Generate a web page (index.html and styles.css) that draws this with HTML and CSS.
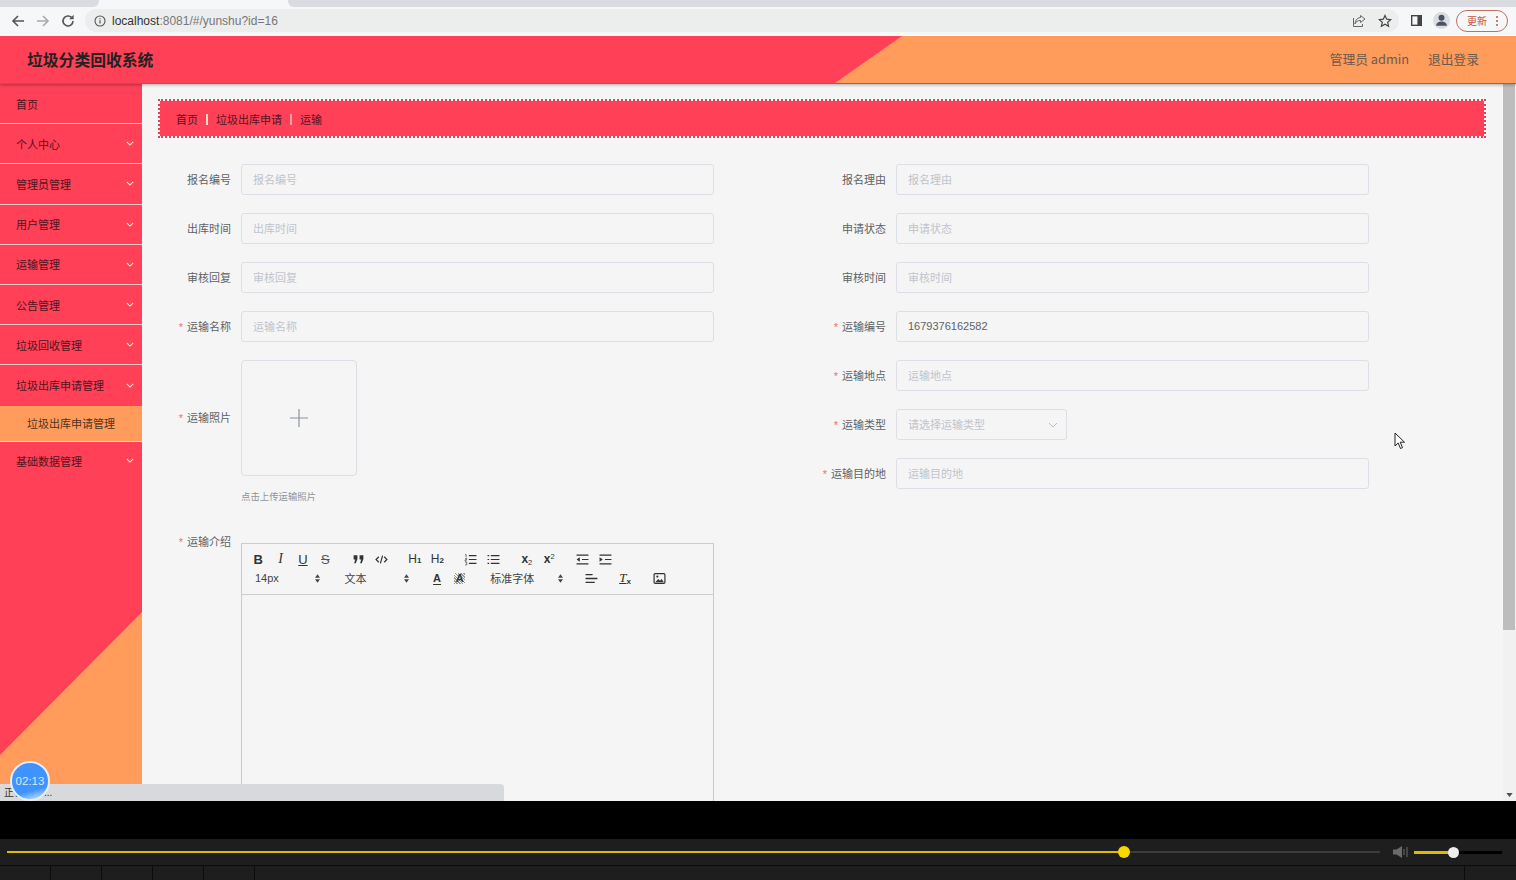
FILE: index.html
```html
<!DOCTYPE html>
<html lang="zh-CN">
<head>
<meta charset="utf-8">
<title>垃圾分类回收系统</title>
<link rel="stylesheet" href="styles.css">
</head>
<body>
<div class="tabstrip"><div class="tab-prev"></div><div class="tab-active"></div><div class="tab-next"></div></div>
<div class="toolbar">
  <div class="nav-icons">
    <svg class="nav-ico" viewBox="0 0 16 16"><path d="M14 8H3M8 3 3 8l5 5" fill="none" stroke="#555" stroke-width="1.6"/></svg>
    <svg class="nav-ico" viewBox="0 0 16 16"><path d="M2 8h11M8 3l5 5-5 5" fill="none" stroke="#aaa" stroke-width="1.6"/></svg>
    <svg class="nav-ico" viewBox="0 0 16 16"><path d="M13 8a5 5 0 1 1-1.5-3.6" fill="none" stroke="#555" stroke-width="1.6"/><path d="M13.6 1.8v4.4H9.2z" fill="#555"/></svg>
  </div>
  <div class="urlbar">
    <svg class="info-ico" viewBox="0 0 12 12"><circle cx="6" cy="6" r="5" fill="none" stroke="#555" stroke-width="1.1"/><path d="M6 5.2v3.4M6 3.2v1" stroke="#555" stroke-width="1.2"/></svg>
    <span class="url"><span class="url-host">localhost</span>:8081/#/yunshu?id=16</span>
    <span class="url-end">
      <svg class="url-ico" viewBox="0 0 14 14"><path d="M8.5 1.5 13 5 8.500 8.500V6.500C5.500 6.500 4 7.500 3 10 3 6.500 5 3.800 8.500 3.500zM1.500 4v8.500h9V10" fill="none" stroke="#666" stroke-width="1"/></svg>
      <svg class="url-ico" viewBox="0 0 14 14"><path d="m7 1.500 1.700 3.700 4 .4-3 2.700.9 4L7 10.200l-3.600 2.100.9-4-3-2.700 4-.4z" fill="none" stroke="#444" stroke-width="1.200"/></svg>
    </span>
  </div>
  <svg class="panel-ico" viewBox="0 0 12 12"><rect x=".75" y=".75" width="10.500" height="10.500" fill="none" stroke="#444" stroke-width="1.500"/><rect x="7" y="1" width="4" height="10" fill="#444"/></svg>
  <div class="avatar"><svg viewBox="0 0 16 16"><circle cx="8" cy="5.500" r="2.800" fill="#4a5160"/><path d="M2.800 13c.5-3 2.500-4 5.200-4s4.700 1 5.200 4z" fill="#4a5160"/></svg></div>
  <div class="update"><span>更新</span><svg class="kebab" viewBox="0 0 4 12"><circle cx="2" cy="2" r="1" fill="#c5543f"/><circle cx="2" cy="6" r="1" fill="#c5543f"/><circle cx="2" cy="10" r="1" fill="#c5543f"/></svg></div>
</div>

<div class="page">
  <header class="app-header">
    <h1 class="app-title">垃圾分类回收系统</h1>
    <div class="user-links"><span>管理员 admin</span><span>退出登录</span></div>
  </header>
  <div class="app-body">
    <nav class="sidebar">
      <div class="menu-item plain"><span>首页</span></div>
      <div class="menu-item"><span>个人中心</span><svg class="chev" viewBox="0 0 10 6"><path d="m1 1 4 4 4-4" fill="none" stroke="currentColor" stroke-width="1.300"/></svg></div>
      <div class="menu-item"><span>管理员管理</span><svg class="chev" viewBox="0 0 10 6"><path d="m1 1 4 4 4-4" fill="none" stroke="currentColor" stroke-width="1.300"/></svg></div>
      <div class="menu-item"><span>用户管理</span><svg class="chev" viewBox="0 0 10 6"><path d="m1 1 4 4 4-4" fill="none" stroke="currentColor" stroke-width="1.300"/></svg></div>
      <div class="menu-item"><span>运输管理</span><svg class="chev" viewBox="0 0 10 6"><path d="m1 1 4 4 4-4" fill="none" stroke="currentColor" stroke-width="1.300"/></svg></div>
      <div class="menu-item"><span>公告管理</span><svg class="chev" viewBox="0 0 10 6"><path d="m1 1 4 4 4-4" fill="none" stroke="currentColor" stroke-width="1.300"/></svg></div>
      <div class="menu-item"><span>垃圾回收管理</span><svg class="chev" viewBox="0 0 10 6"><path d="m1 1 4 4 4-4" fill="none" stroke="currentColor" stroke-width="1.300"/></svg></div>
      <div class="menu-item open"><span>垃圾出库申请管理</span><svg class="chev" viewBox="0 0 10 6"><path d="m1 1 4 4 4-4" fill="none" stroke="currentColor" stroke-width="1.300"/></svg></div>
      <div class="submenu-item">垃圾出库申请管理</div>
      <div class="menu-item open last"><span>基础数据管理</span><svg class="chev" viewBox="0 0 10 6"><path d="m1 1 4 4 4-4" fill="none" stroke="currentColor" stroke-width="1.300"/></svg></div>
    </nav>
    <main class="content">
      <div class="breadcrumb">
        <span class="crumb">首页</span><i class="sep"></i><span class="crumb">垃圾出库申请</span><i class="sep dim"></i><span class="crumb">运输</span>
      </div>
      <div class="form">
        <div class="form-col">
          <div class="row"><label class="label">报名编号</label><div class="input ph">报名编号</div></div>
          <div class="row"><label class="label">出库时间</label><div class="input ph">出库时间</div></div>
          <div class="row"><label class="label">审核回复</label><div class="input ph">审核回复</div></div>
          <div class="row"><label class="label req">运输名称</label><div class="input ph">运输名称</div></div>
          <div class="row upload-row"><label class="label req">运输照片</label>
            <div class="upload"><svg class="plus" viewBox="0 0 18 18"><path d="M9 0v18M0 9h18" stroke="#8c939d" stroke-width="1.200"/></svg></div>
          </div>
          <div class="hint">点击上传运输照片</div>
          <div class="row editor-row"><label class="label req">运输介绍</label>
            <div class="editor">
              <div class="ed-toolbar">
                <div class="ed-line first">
                  <div class="ed-group">
                    <span class="btn b">B</span><span class="btn it">I</span><span class="btn un">U</span><span class="btn st">S</span>
                  </div>
                  <div class="ed-group">
                    <span class="btn"><svg class="ed-ico" viewBox="0 0 12 12"><path d="M1.500 2h3.500v3.500L3.500 9.500H2l1-3.500H1.500zM7 2h3.500v3.500L9 9.500H7.500l1-3.500H7z" fill="#333"/></svg></span>
                    <span class="btn"><svg class="ed-ico" viewBox="0 0 12 12"><path d="M3.500 3.500 1 6l2.500 2.500M8.500 3.500 11 6 8.500 8.500M7 2.500 5 9.500" fill="none" stroke="#333" stroke-width="1.100"/></svg></span>
                  </div>
                  <div class="ed-group">
                    <span class="btn h">H<small>1</small></span><span class="btn h">H<small>2</small></span>
                  </div>
                  <div class="ed-group">
                    <span class="btn"><svg class="ed-ico" viewBox="0 0 12 12"><path d="M4.500 2.500H11.500M4.500 6H11.500M4.500 9.500H11.500" stroke="#333" stroke-width="1.100"/><path d="M1 1.500h1v2.500M1 5h1.500v1.300H1v1.200h1.500M1 8.500h1.500v2.500H1" fill="none" stroke="#333" stroke-width=".6"/></svg></span>
                    <span class="btn"><svg class="ed-ico" viewBox="0 0 12 12"><path d="M3.500 2.500H11.500M3.500 6H11.500M3.500 9.500H11.500M.5 2.500h1.500M.5 6h1.500M.5 9.500h1.500" stroke="#333" stroke-width="1.100"/></svg></span>
                  </div>
                  <div class="ed-group">
                    <span class="btn x">x<span class="idx low">2</span></span><span class="btn x">x<span class="idx high">2</span></span>
                  </div>
                  <div class="ed-group">
                    <span class="btn"><svg class="ed-ico" viewBox="0 0 12 12"><path d="M.5 2h11M5.500 6h6M.5 10h11" stroke="#333" stroke-width="1.100"/><path d="M3.500 4v4L.5 6z" fill="#333"/></svg></span>
                    <span class="btn"><svg class="ed-ico" viewBox="0 0 12 12"><path d="M.5 2h11M5.500 6h6M.5 10h11" stroke="#333" stroke-width="1.100"/><path d="M.5 4v4l3-2z" fill="#333"/></svg></span>
                  </div>
                </div>
                <div class="ed-line second">
                  <div class="picker p-size"><span>14px</span><svg class="updown" viewBox="0 0 6 10"><path d="M3 0 6 4H0zM3 10 0 6h6z" fill="#444"/></svg></div>
                  <div class="picker p-size"><span>文本</span><svg class="updown" viewBox="0 0 6 10"><path d="M3 0 6 4H0zM3 10 0 6h6z" fill="#444"/></svg></div>
                  <div class="ed-group">
                    <span class="btn color-a">A</span><span class="btn bg-a">A</span>
                  </div>
                  <div class="picker p-font"><span>标准字体</span><svg class="updown" viewBox="0 0 6 10"><path d="M3 0 6 4H0zM3 10 0 6h6z" fill="#444"/></svg></div>
                  <div class="ed-group">
                    <span class="btn"><svg class="ed-ico" viewBox="0 0 12 12"><path d="M.5 2.500h6.500M.5 6h11M.5 9.500h8.500" stroke="#333" stroke-width="1.200"/></svg></span>
                  </div>
                  <div class="ed-group">
                    <span class="btn clean"><span class="clean-t">T</span><span class="idx low">x</span></span>
                  </div>
                  <div class="ed-group">
                    <span class="btn"><svg class="ed-ico" viewBox="0 0 12 12"><rect x="1" y="1.500" width="10" height="9" rx="1" fill="none" stroke="#333" stroke-width="1.100"/><path d="m2 9.500 3-3 1.500 1.500L8 6.500l2 3z" fill="#333"/><circle cx="4" cy="4.200" r="1" fill="#333"/></svg></span>
                  </div>
                </div>
              </div>
              <div class="ed-body"></div>
            </div>
          </div>
        </div>
        <div class="form-col">
          <div class="row"><label class="label">报名理由</label><div class="input ph">报名理由</div></div>
          <div class="row"><label class="label">申请状态</label><div class="input ph">申请状态</div></div>
          <div class="row"><label class="label">审核时间</label><div class="input ph">审核时间</div></div>
          <div class="row"><label class="label req">运输编号</label><div class="input value">1679376162582</div></div>
          <div class="row"><label class="label req">运输地点</label><div class="input ph">运输地点</div></div>
          <div class="row"><label class="label req">运输类型</label>
            <div class="input ph select"><span>请选择运输类型</span><svg class="sel-chev" viewBox="0 0 10 6"><path d="m1 1 4 4 4-4" fill="none" stroke="#b8bcc4"/></svg></div>
          </div>
          <div class="row"><label class="label req">运输目的地</label><div class="input ph">运输目的地</div></div>
        </div>
      </div>
    </main>
    <div class="scrollbar">
      <div class="thumb"></div>
      <svg class="scroll-arrow" viewBox="0 0 8 5"><path d="M0 0h8L4 5z" fill="#505050"/></svg>
    </div>
  </div>
  <div class="statusbar"><span>正在等待...</span></div>
  <div class="timer">02:13</div>
  <svg class="cursor" viewBox="0 0 12 18"><path d="M1 1v13l3.200-3 2.300 5.500 2-.9L6.200 10.200H10.500z" fill="#fff" stroke="#222" stroke-width="1"/></svg>
</div>

<div class="blackband"></div>
<div class="player">
  <div class="progress"><div class="progress-done"></div><div class="progress-knob"></div></div>
  <svg class="speaker" viewBox="0 0 15 14"><path d="M0 4.500h3.500L9 1v12L3.500 9.500H0z" fill="#6a6a6a"/><path d="M11 4v6M14 2v10" stroke="#6a6a6a"/></svg>
  <div class="volume"><div class="volume-done"></div><div class="volume-knob"></div></div>
</div>
<div class="player-tabs">
  <div class="ptab"></div><div class="ptab"></div><div class="ptab"></div><div class="ptab"></div><div class="ptab"></div><div class="ptab wide"></div>
</div>
</body>
</html>
```
FILE: styles.css
```css
* { box-sizing: border-box; }
html, body { margin: 0; height: 880px; overflow: hidden; }
body {
  display: flex; flex-direction: column; width: 1516px; background: #000;
  font-family: "Liberation Sans", "Noto Sans CJK SC", sans-serif; font-size: 11px; color: #333;
}

/* browser chrome */
.tabstrip { height: 7px; background: #f6f7f8; display: flex; }
.tab-prev { width: 99px; background: #d9dbe0; border-radius: 0 0 6px 0; }
.tab-active { width: 189px; background: #f6f7f8; }
.tab-next { flex: 1; background: #d9dbe0; border-radius: 0 0 0 6px; }
.toolbar { height: 29px; background: #f6f7f8; display: flex; align-items: center; border-bottom: 1px solid #fff; padding-bottom: 1px; }
.nav-icons { width: 85px; padding-left: 10px; display: flex; gap: 9px; }
.nav-ico { width: 16px; height: 16px; }
.urlbar { width: 1314px; height: 23px; border-radius: 12px; background: #eceded; display: flex; align-items: center; padding: 0 7px 0 9px; }
.info-ico { width: 12px; height: 12px; margin-right: 6px; }
.url { font: 12px "Liberation Sans", sans-serif; color: #777; }
.url-host { color: #333; }
.url-end { margin-left: auto; display: flex; gap: 12px; }
.url-ico { width: 14px; height: 14px; display: block; }
.panel-ico { width: 11px; height: 11px; margin-left: 12px; }
.avatar { width: 17px; height: 17px; border-radius: 50%; background: #dadce3; margin-left: 11px; }
.avatar svg { display: block; width: 17px; height: 17px; }
.update { width: 52px; height: 22px; margin-left: 6px; border: 1px solid #c0705e; border-radius: 11px; display: flex; align-items: center; justify-content: space-between; padding: 0 8px 0 10px; font-size: 10px; color: #c5543f; }
.kebab { width: 4px; height: 12px; }

/* application */
.page { position: relative; height: 765px; flex: none; display: flex; flex-direction: column; overflow: hidden; background: #f5f5f5; }
.app-header {
  position: relative; z-index: 2; height: 48px; flex: none; display: flex; align-items: center; justify-content: space-between;
  background: #ff9b5b; border-bottom: 1px solid rgba(90,50,50,.55); box-shadow: 0 1px 3px rgba(0,0,0,.3); padding: 0 37px 0 27px;
}
.app-header::before { content: ""; position: absolute; inset: 0; background: #ff4056; clip-path: polygon(0 0, 902px 0, 835px 100%, 0 100%); }
.app-title { position: relative; margin: 3px 0 0; font-size: 15.8px; font-weight: 700; color: #222; line-height: 24px; }
.user-links { position: relative; display: flex; gap: 19px; font-family: "Noto Sans CJK SC", sans-serif; font-size: 12.75px; color: #6d5a4c; margin-bottom: 3px; }

.app-body { flex: 1; min-height: 0; display: flex; }
.sidebar { position: relative; width: 142px; flex: none; background: #ff4056; }
.sidebar::before { content: ""; position: absolute; inset: 0; background: #ff9b5b; clip-path: polygon(142px 528px, 142px 100%, 0 100%, 0 671px); }
.menu-item { position: relative; height: 40.2px; padding: 0 8px 0 16px; display: flex; align-items: center; justify-content: space-between; border-bottom: 1px solid #ffc9cd; color: #4f1520; }
.menu-item.open { border-bottom: 0; }
.menu-item.last { height: 38px; }
.chev { width: 8px; height: 5px; color: #ffe6dc; }
.submenu-item { position: relative; height: 36px; padding-left: 27px; display: flex; align-items: center; background: #ff9b5b; border-bottom: 1px solid #ffe3d3; color: #4f3320; }

.content { flex: 1; min-width: 0; padding: 15px 17px 0 16px; overflow: hidden; }
.breadcrumb {
  height: 39px; display: flex; align-items: center; padding-left: 16px;
  border: 2px dotted #e83c52;
  background: linear-gradient(#ff4056, #ff4056) padding-box, #fff border-box;
}
.crumb { color: #4f1520; }
.sep { width: 2px; height: 11px; margin: 1px 8px 0; background: #ffd9c4; }
.sep.dim { background: #e7a1a4; }

.form { display: grid; grid-template-columns: 655px 1fr; padding-top: 26px; }
.form-col { min-width: 0; }
.row { display: flex; align-items: center; margin-bottom: 18px; }
.label { width: 73px; margin-right: 10px; padding-bottom: 2px; flex: none; text-align: right; color: #606266; }
.label.req::before { content: "*"; color: #f56c6c; margin-right: 4px; }
.input { width: 473px; height: 31px; flex: none; border: 1px solid #dcdfe6; border-radius: 3px; display: flex; align-items: center; padding: 0 11px 2px; }
.input.ph { color: #c0c4cc; }
.input.value { color: #606266; }
.input.select { width: 171px; justify-content: space-between; padding-right: 8px; }
.sel-chev { width: 10px; height: 6px; margin-top: 2px; }
.upload-row { margin-bottom: 0; }
.upload { width: 116px; height: 116px; border: 1px solid #dcdfe6; border-radius: 4px; display: flex; align-items: center; justify-content: center; }
.plus { width: 18px; height: 18px; }
.hint { margin: 15px 0 0 83px; font-size: 9.4px; line-height: 12px; color: #909399; height: 12px; }
.editor-row { align-items: flex-start; margin: 32px 0 0; }
.editor-row .label { line-height: 14px; }
.editor { width: 473px; height: 400px; margin-top: 8px; border: 1px solid #ccc; flex: none; }
.ed-toolbar { height: 51px; border-bottom: 1px solid #ccc; padding: 6px 0 0 5px; }
.ed-line { display: flex; height: 19px; align-items: center; }
.ed-line.first { gap: 11.2px; height: 18.500px; }
.ed-line.second { gap: 11.4px; }
.ed-group { display: flex; }
.btn { width: 22.4px; height: 19px; display: flex; align-items: center; justify-content: center; font-size: 12px; color: #333; }
.second .btn { width: 22.6px; }
.btn.b { font-weight: 700; font-size: 13px; }
.btn.it { font-family: "Liberation Serif", serif; font-style: italic; font-size: 14px; }
.btn.un { text-decoration: underline; font-size: 13px; }
.btn.st { text-decoration: line-through; font-size: 13px; color: #555; }
.btn.h { font-size: 12px; }
.btn.h small { font-size: 8px; font-weight: 700; align-self: flex-end; margin-bottom: 4px; }
.btn.x { font-size: 12px; font-weight: 700; }
.idx { font-size: 7.5px; line-height: 8px; font-weight: 400; }
.idx.low { align-self: flex-end; margin-bottom: 2px; }
.idx.high { align-self: flex-start; margin-top: 3px; }
.ed-ico { width: 13px; height: 13px; display: block; }
.picker { display: flex; justify-content: space-between; align-items: center; padding: 0 5px 0 8px; color: #444; }
.p-size { width: 78px; }
.p-font { width: 86px; }
.updown { width: 5px; height: 9px; }
.btn.color-a { font-size: 11px; font-weight: 700; text-decoration: underline; text-underline-offset: 2px; }
.btn.bg-a { font-size: 11px; font-weight: 700; background: repeating-linear-gradient(45deg, #999 0 1px, transparent 1px 2px) center / 11px 11px no-repeat; }
.btn.clean { font-size: 13px; }
.clean-t { font-family: "Liberation Serif", serif; font-style: italic; text-decoration: underline; }
.btn.clean .idx { font-weight: 700; font-size: 8px; }

.scrollbar { position: relative; width: 13px; flex: none; background: #f1f1f1; }
.thumb { height: 546px; width: 12px; background: #bdbdbd; }
.scroll-arrow { position: absolute; left: 3px; bottom: 4px; width: 7px; height: 4px; }

.statusbar { position: absolute; z-index: 3; left: 0; bottom: 0; width: 504px; height: 17px; background: #d8d9dc; border-radius: 0 4px 0 0; padding-left: 4px; line-height: 18px; font-size: 10px; color: #333; }
.timer { position: absolute; z-index: 4; left: 10px; top: 725px; width: 40px; height: 40px; border-radius: 50%; border: 2px solid #e8eef8; background: linear-gradient(165deg, #3f93ff 0%, #3f93ff 72%, #a8d4ff 92%, #d8ecff 100%); color: #d9e9ff; font-size: 11.500px; display: flex; align-items: center; justify-content: center; }
.cursor { position: absolute; z-index: 4; left: 1394px; top: 396px; width: 12px; height: 18px; }

/* video player */
.blackband { height: 38px; background: #000; flex: none; }
.player { height: 27px; flex: none; background: #1e1e1e; display: flex; align-items: center; padding-left: 7px; border-bottom: 1px solid #0c0c0c; }
.progress { position: relative; width: 1373px; height: 2px; background: #3c3c3c; }
.progress-done { width: 1117px; height: 2px; background: #d8c000; }
.progress-knob { position: absolute; left: 1111px; top: -5px; width: 12px; height: 12px; border-radius: 50%; background: #f5d800; }
.speaker { width: 15px; height: 14px; margin-left: 13px; }
.volume { position: relative; width: 88px; height: 3px; margin-left: 6px; background: #000; }
.volume-done { width: 39px; height: 3px; background: #d8c000; }
.volume-knob { position: absolute; left: 34px; top: -4px; width: 11px; height: 11px; border-radius: 50%; background: #eee; }
.player-tabs { flex: 1; display: flex; background: #1e1e1e; }
.ptab { width: 51px; border-right: 1px solid #0c0c0c; }
.ptab.wide { width: 1210px; }
```
